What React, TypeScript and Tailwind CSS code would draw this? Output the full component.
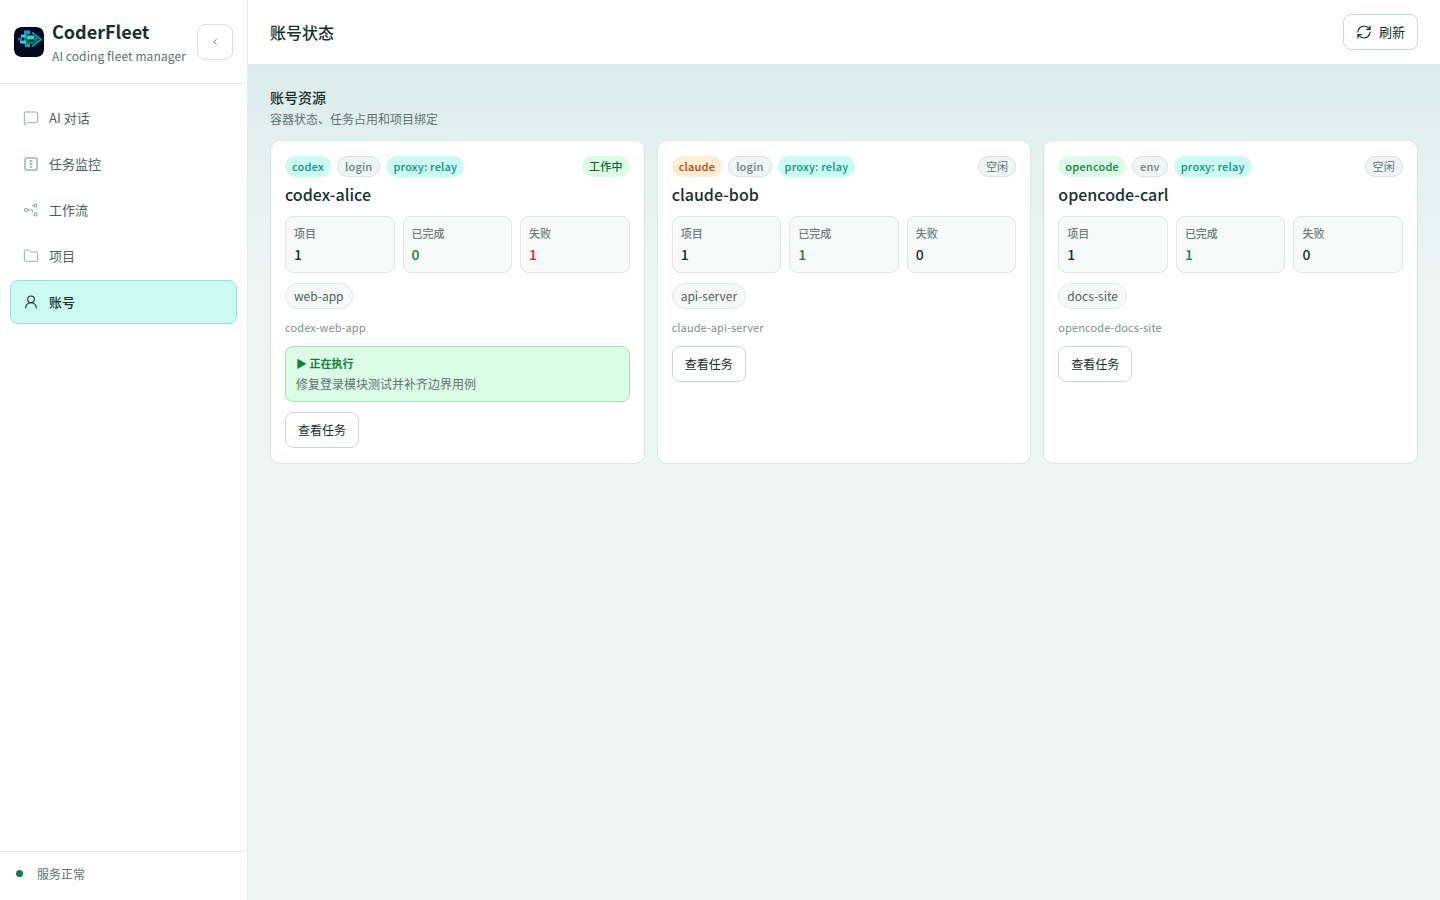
import { MessageSquare, Folder, UserRound, RefreshCw, ChevronLeft } from 'lucide-react'

type Stat = { label: string; value: number; color: string }

type Account = {
  name: string
  tool: string
  toolClass: string
  auth: string
  status: string
  busy: boolean
  project: string
  container: string
  done: number
  failed: number
  task?: string
}

const accounts: Account[] = [
  {
    name: 'codex-alice',
    tool: 'codex',
    toolClass: 'bg-[#ccfbf1] text-[#0d9488]',
    auth: 'login',
    status: '工作中',
    busy: true,
    project: 'web-app',
    container: 'codex-web-app',
    done: 0,
    failed: 1,
    task: '修复登录模块测试并补齐边界用例',
  },
  {
    name: 'claude-bob',
    tool: 'claude',
    toolClass: 'bg-[#ffedd5] text-[#c2410c]',
    auth: 'login',
    status: '空闲',
    busy: false,
    project: 'api-server',
    container: 'claude-api-server',
    done: 1,
    failed: 0,
  },
  {
    name: 'opencode-carl',
    tool: 'opencode',
    toolClass: 'bg-[#dcfce7] text-[#15803d]',
    auth: 'env',
    status: '空闲',
    busy: false,
    project: 'docs-site',
    container: 'opencode-docs-site',
    done: 1,
    failed: 0,
  },
]

const Logo = () => (
  <svg viewBox="0 0 30 30" className="size-[30px] shrink-0 rounded-[7px]">
    <rect width="30" height="30" rx="7" fill="#030a1e" />
    <path d="M18 5.5 27 12.5 18 19.5" fill="none" stroke="#0e8fa8" strokeWidth="2" />
    <path d="M10 8h11l3.5 4.5L21 17H10z" fill="#0f766e" />
    <rect x="10" y="3.5" width="6" height="4" fill="#0ea5c4" />
    <rect x="7" y="7.5" width="5" height="3" fill="#22d3ee" />
    <rect x="4" y="10.5" width="4" height="3" fill="#0e7490" />
    <rect x="6" y="13.5" width="6" height="3" fill="#22d3ee" />
    <rect x="11" y="17" width="5" height="3" fill="#0ea5c4" />
    <rect x="13" y="9" width="7" height="3" fill="#2dd4bf" />
    <rect x="13" y="13" width="8" height="1.5" fill="#042f3a" />
  </svg>
)

const MonitorIcon = () => (
  <svg viewBox="0 0 16 16" className="size-[16px]" fill="none" stroke="#8fa5a0" strokeWidth="1.3">
    <rect x="2" y="1.8" width="12" height="12.4" rx="2" />
    <path d="M6.5 5h3M6.5 8h3M7 11h2" />
  </svg>
)

const FlowIcon = () => (
  <svg viewBox="0 0 16 16" className="size-[16px]" fill="none" stroke="#8fa5a0" strokeWidth="1.1">
    <circle cx="3" cy="8" r="1.5" />
    <circle cx="12.5" cy="3.5" r="1.5" />
    <circle cx="12.5" cy="12.5" r="1.5" />
    <path d="M4.5 8h4.5l1 2.5M9 3.5h2" />
  </svg>
)

const navItems = [
  { label: 'AI 对话', icon: <MessageSquare size={16} strokeWidth={1.4} className="text-[#8fa5a0]" /> },
  { label: '任务监控', icon: <MonitorIcon /> },
  { label: '工作流', icon: <FlowIcon /> },
  { label: '项目', icon: <Folder size={16} strokeWidth={1.4} className="text-[#8fa5a0]" /> },
]

const Sidebar = () => (
  <aside className="flex h-full w-[248px] shrink-0 flex-col border-r border-[#e3eceb] bg-[#fefffe]">
    <div className="flex h-[84px] items-center justify-between border-b border-[#e3eceb] px-[14px]">
      <div className="flex items-center gap-2">
        <Logo />
        <div className="pt-[2px]">
          <div className="text-[18px] leading-[24px] font-semibold text-[#16302d]">CoderFleet</div>
          <div className="mt-[3px] text-[12px] leading-[20px] tracking-[0.1px] whitespace-nowrap text-[#5d7370]">AI coding fleet manager</div>
        </div>
      </div>
      <button className="flex size-[36px] items-center justify-center rounded-[8px] border border-[#d5e1df] bg-white">
        <ChevronLeft size={10} className="text-[#4c625f]" />
      </button>
    </div>
    <nav className="flex flex-1 flex-col gap-[2px] px-[10px] pt-[12px]">
      {navItems.map((item) => (
        <div key={item.label} className="flex h-[44px] items-center gap-[10px] rounded-[8px] border border-transparent px-[12px] text-[13px] text-[#4c625f]">
          {item.icon}
          <span>{item.label}</span>
        </div>
      ))}
      <div className="flex h-[44px] items-center gap-[10px] rounded-[8px] border border-[#99e0d2] bg-[#ccfbf1] px-[12px] text-[13px] font-medium text-[#16302d]">
        <UserRound size={16} strokeWidth={1.6} />
        <span>账号</span>
      </div>
    </nav>
    <div className="flex h-[49px] items-center gap-[14px] border-t border-[#e3eceb] px-[16px] pb-[5px] text-[12px] text-[#5d7370]">
      <span className="size-[7px] rounded-full bg-[#15803d]" />
      <span>服务正常</span>
    </div>
  </aside>
)

const StatBox = ({ label, value, color }: Stat) => (
  <div className="h-[57px] rounded-[8px] border border-[#dfe8e6] bg-[#f7faf9] px-[8px] pt-[7px]">
    <div className="text-[11px] leading-[18px] font-medium text-[#6b807c]">{label}</div>
    <div className={`text-[14px] leading-[24px] font-medium ${color}`}>{value}</div>
  </div>
)

const Pill = ({ className, children }: { className: string; children: string }) => (
  <span className={`flex h-[21px] items-center rounded-full px-[7px] pb-[1px] text-[11px] font-medium tracking-[0.2px] ${className}`}>{children}</span>
)

const AccountCard = ({ account }: { account: Account }) => (
  <div className="flex flex-col rounded-[10px] border border-[#dbe6e4] bg-white px-[14px] pt-[15px] pb-[15px]">
    <div className="flex items-center justify-between">
      <div className="flex items-center gap-[6px]">
        <Pill className={account.toolClass}>{account.tool}</Pill>
        <Pill className="border border-[#d5e1df] bg-[#eff5f4] text-[#6b807c]">{account.auth}</Pill>
        <Pill className="bg-[#ccfbf1] text-[#0d9488]">proxy: relay</Pill>
      </div>
      {account.busy ? (
        <Pill className="bg-[#dcfce7] text-[#166534]">{account.status}</Pill>
      ) : (
        <Pill className="border border-[#d5e1df] bg-[#eff5f4] font-normal text-[#5d7370]">{account.status}</Pill>
      )}
    </div>
    <div className="mt-[5px] text-[16px] leading-[24px] font-medium text-[#16302d]">{account.name}</div>
    <div className="mt-[10px] grid grid-cols-3 gap-[8px]">
      <StatBox label="项目" value={1} color="text-[#16302d]" />
      <StatBox label="已完成" value={account.done} color="text-[#15803d]" />
      <StatBox label="失败" value={account.failed} color={account.failed ? 'text-[#dc2626]' : 'text-[#16302d]'} />
    </div>
    <div className="mt-[10px] flex">
      <span className="flex h-[26px] items-center rounded-full border border-[#dfe8e6] bg-[#f7faf9] px-[8px] text-[12px] text-[#4c625f]">{account.project}</span>
    </div>
    <div className="mt-[9px] text-[11px] leading-[18px] tracking-[0.1px] text-[#7c908c]">{account.container}</div>
    {account.task && (
      <div className="mt-[10px] h-[56px] rounded-[8px] border border-[#a7dfb8] bg-[#dcfce7] px-[10px] pt-[6px]">
        <div className="text-[11px] leading-[20px] font-bold text-[#15803d]">▶ 正在执行</div>
        <div className="mt-[1px] text-[12px] leading-[20px] text-[#5d7370]">{account.task}</div>
      </div>
    )}
    <div className="mt-[10px] flex">
      <button className="h-[36px] rounded-[8px] border border-[#c9d8d5] bg-white px-[12px] text-[12px] text-[#16302d]">查看任务</button>
    </div>
  </div>
)

export default function App() {
  return (
    <div className="flex h-[900px] w-[1440px] overflow-hidden font-['Noto_Sans_CJK_SC','Noto_Sans',sans-serif]">
      <Sidebar />
      <main className="flex min-w-0 flex-1 flex-col bg-[linear-gradient(180deg,#dcedeb_65px,#eef6f4_280px)]">
        <header className="flex h-[65px] shrink-0 items-center justify-between border-b border-[#e3eceb] bg-[#fefffe] px-[22px]">
          <h1 className="text-[16px] font-medium text-[#16302d]">账号状态</h1>
          <button className="flex h-[36px] items-center gap-[7px] rounded-[8px] border border-[#c9d8d5] bg-white px-[12px] text-[13px] text-[#16302d]">
            <RefreshCw size={16} strokeWidth={1.8} />
            <span>刷新</span>
          </button>
        </header>
        <section className="px-[22px] pt-[22px]">
          <div className="text-[14px] leading-[20px] font-medium text-[#16302d]">账号资源</div>
          <div className="mt-[2px] text-[12px] leading-[20px] text-[#5d7370]">容器状态、任务占用和项目绑定</div>
          <div className="mt-[11px] grid grid-cols-3 gap-[12px]">
            {accounts.map((account) => (
              <AccountCard key={account.name} account={account} />
            ))}
          </div>
        </section>
      </main>
    </div>
  )
}
